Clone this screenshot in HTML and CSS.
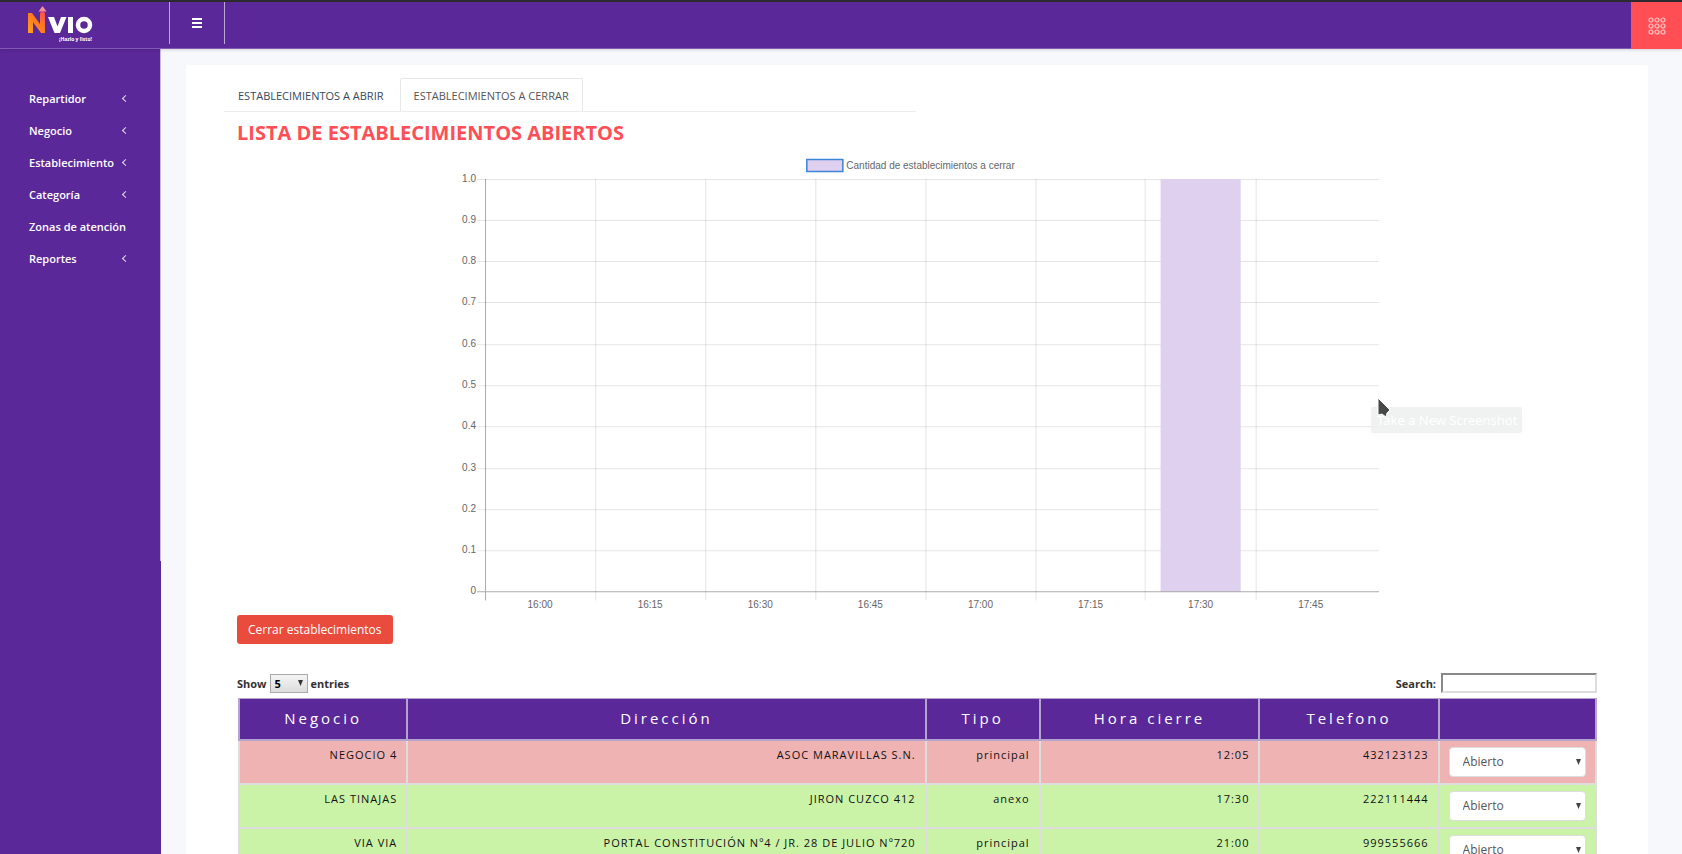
FILE: index.html
```html
<!DOCTYPE html>
<html lang="es">
<head>
<meta charset="utf-8">
<title>NVIO - Establecimientos a cerrar</title>
<link rel="stylesheet" href="styles.css">
</head>
<body>
<header class="topbar">
  <a class="brand" href="#" aria-label="NVIO">
    <svg width="68" height="38" viewBox="0 0 68 38">
      <defs><linearGradient id="flame" x1="0" y1="1" x2="1" y2="0"><stop offset="0" stop-color="#ffa31a"/><stop offset=".55" stop-color="#ff7a1f"/><stop offset="1" stop-color="#fb4f57"/></linearGradient></defs>
      <path d="M2 28V8h4l8 11V8h5v20h-4L7 17v11z" fill="url(#flame)"/>
      <path d="M16.500 1l4 5.500h-8z" fill="#f59098"/>
      <path d="M14.500 6.500h4V9h-4z" fill="#fb4f57"/>
      <path d="M22 12h6l3.500 9.500L35 12h5.500L34 28h-5.500zM42 12h5v16h-5z" fill="#fff"/>
      <circle cx="58" cy="20" r="6" fill="none" stroke="#fff" stroke-width="4.500"/>
      <text class="brand-tag" x="66" y="36" text-anchor="end">¡Hazlo y listo!</text>
    </svg>
  </a>
  <button class="menu-toggle" aria-label="Menú">
    <svg width="12" height="12" viewBox="0 0 12 12"><path d="M1 2h10M1 6h10M1 10h10" stroke="#fff" stroke-width="2"/></svg>
  </button>
  <button class="apps" aria-label="Aplicaciones">
    <svg width="18" height="18" viewBox="0 0 18 18" fill="none" stroke="#ffc4c6" stroke-width="1.200"><circle cx="3" cy="3" r="2"/><circle cx="9" cy="3" r="2"/><circle cx="15" cy="3" r="2"/><circle cx="3" cy="9" r="2"/><circle cx="9" cy="9" r="2"/><circle cx="15" cy="9" r="2"/><circle cx="3" cy="15" r="2"/><circle cx="9" cy="15" r="2"/><circle cx="15" cy="15" r="2"/></svg>
  </button>
</header>
<div class="shell">
  <aside class="sidebar">
    <nav class="nav">
      <a href="#"><span>Repartidor</span><i class="chevron"></i></a>
      <a href="#"><span>Negocio</span><i class="chevron"></i></a>
      <a href="#"><span>Establecimiento</span><i class="chevron"></i></a>
      <a href="#"><span>Categoría</span><i class="chevron"></i></a>
      <a href="#"><span>Zonas de atención</span></a>
      <a href="#"><span>Reportes</span><i class="chevron"></i></a>
    </nav>
  </aside>
  <main class="content">
    <section class="card">
      <div class="tabs">
        <button class="tab">ESTABLECIMIENTOS A ABRIR</button>
        <button class="tab active">ESTABLECIMIENTOS A CERRAR</button>
      </div>
      <div class="panel">
        <h1>LISTA DE ESTABLECIMIENTOS ABIERTOS</h1>
        <div class="chart">
          <svg viewBox="0 0 924 458" role="img" aria-label="Cantidad de establecimientos a cerrar">
            <rect x="351.500" y="2.500" width="36" height="12" fill="#dfd0f0" stroke="#3d84d6" stroke-width="1.500"/>
            <text x="391" y="12">Cantidad de establecimientos a cerrar</text>
            <path class="grid" d="M22 22.500H925M22 63.500H925M22 104.500H925M22 145.500H925M22 187.500H925M22 228.500H925M22 269.500H925M22 311.500H925M22 352.500H925M22 393.500H925"/>
            <path class="grid" d="M140.500 22V443M250.500 22V443M360.500 22V443M470.500 22V443M580.500 22V443M689.500 22V443M800.500 22V443"/>
            <rect x="705" y="22" width="80" height="412" fill="#dfd0f0"/>
            <path class="axis" d="M22 434.500H925M30.500 22V443"/>
            <g text-anchor="end">
              <text x="21" y="25">1.0</text><text x="21" y="66">0.9</text><text x="21" y="107">0.8</text><text x="21" y="148">0.7</text><text x="21" y="190">0.6</text><text x="21" y="231">0.5</text><text x="21" y="272">0.4</text><text x="21" y="314">0.3</text><text x="21" y="355">0.2</text><text x="21" y="396">0.1</text><text x="21" y="437">0</text>
            </g>
            <g text-anchor="middle">
              <text x="85" y="451">16:00</text><text x="195" y="451">16:15</text><text x="305" y="451">16:30</text><text x="415" y="451">16:45</text><text x="525" y="451">17:00</text><text x="635" y="451">17:15</text><text x="745" y="451">17:30</text><text x="855" y="451">17:45</text>
            </g>
          </svg>
        </div>
        <button class="btn-danger">Cerrar establecimientos</button>
        <div class="table-tools">
          <label>Show <select class="length"><option>5</option></select> entries</label>
          <label>Search: <input class="search" type="search"></label>
        </div>
        <table>
          <colgroup><col class="c-negocio"><col class="c-direccion"><col class="c-tipo"><col class="c-hora"><col class="c-telefono"><col class="c-estado"></colgroup>
          <thead><tr><th>Negocio</th><th>Dirección</th><th>Tipo</th><th>Hora cierre</th><th>Telefono</th><th></th></tr></thead>
          <tbody>
            <tr class="late"><td>NEGOCIO 4</td><td>ASOC MARAVILLAS S.N.</td><td>principal</td><td>12:05</td><td>432123123</td><td><select class="state" aria-label="Estado NEGOCIO 4"><option>Abierto</option></select></td></tr>
            <tr><td>LAS TINAJAS</td><td>JIRON CUZCO 412</td><td>anexo</td><td>17:30</td><td>222111444</td><td><select class="state" aria-label="Estado LAS TINAJAS"><option>Abierto</option></select></td></tr>
            <tr><td>VIA VIA</td><td>PORTAL CONSTITUCIÓN Nº4 / JR. 28 DE JULIO Nº720</td><td>principal</td><td>21:00</td><td>999555666</td><td><select class="state" aria-label="Estado VIA VIA"><option>Abierto</option></select></td></tr>
          </tbody>
        </table>
      </div>
    </section>
  </main>
</div>
<div class="hint">Take a New Screenshot</div>
<svg class="pointer" width="14" height="22" viewBox="0 0 14 22"><path d="M1 1v17l4-1 4 3 1-4 3-3z" fill="#484848" stroke="#fff"/></svg>
</body>
</html>
```
FILE: styles.css
```css
* { box-sizing: border-box; }
body {
  margin: 0;
  height: 100vh;
  overflow: hidden;
  display: flex;
  flex-direction: column;
  border-top: 2px solid #2b2a2e;
  background: #f7f8fb;
  font-family: "Open Sans", "Noto Sans", sans-serif;
  font-size: 12px;
  color: #333;
}
button, select, input { font: inherit; }
button { border: 0; padding: 0; background: none; cursor: pointer; }
a { color: inherit; text-decoration: none; }

.topbar {
  position: relative;
  z-index: 1;
  flex: none;
  display: flex;
  align-items: flex-start;
  height: 47px;
  background: #5b2899;
  border-bottom: 1px solid #8159b3;
  box-shadow: 0 1px 3px rgba(0, 0, 0, .15);
}
.brand { width: 169px; padding: 3px 0 0 26px; }
.brand svg { display: block; }
.brand-tag { font-size: 5px; font-weight: 700; fill: #fff; }
.menu-toggle {
  display: flex;
  align-items: center;
  justify-content: center;
  width: 56px;
  height: 42px;
  border: solid #bca6d8;
  border-width: 0 1px;
}
.apps {
  display: flex;
  align-items: center;
  justify-content: center;
  width: 51px;
  height: 47px;
  margin-left: auto;
  background: #ff4e54;
}

.shell { flex: 1; min-height: 0; display: flex; }
.sidebar { flex: none; width: 161px; background: #5b2899; }
.nav {
  height: 60vh;
  padding-top: 33px;
  border-right: 1px solid #c9b8df;
  color: #fff;
  font-size: 11px;
  font-weight: 600;
}
.nav a {
  display: flex;
  align-items: center;
  justify-content: space-between;
  height: 32px;
  padding: 0 32px 0 29px;
  white-space: nowrap;
}
.chevron {
  width: 5px;
  height: 5px;
  border: solid #e6dcf2;
  border-width: 0 0 1px 1px;
  transform: rotate(45deg);
}

.content { flex: 1; min-width: 0; padding: 16px 34px 0 25px; }
.card { padding: 13px 51px 40px; background: #fff; border-radius: 3px; }
.tabs {
  display: flex;
  width: 692px;
  margin-left: -13px;
  border-bottom: 1px solid #ededed;
}
.tab {
  height: 33px;
  padding: 0 13px;
  border: 1px solid transparent;
  border-bottom: 0;
  color: #34495e;
  font-size: 11px;
}
.tab.active {
  margin: 0 0 -1px 2px;
  background: #fff;
  border-color: #e8e8e8;
  border-radius: 2px 2px 0 0;
  color: #555;
}
h1 {
  margin: 7px 0 10px;
  font-size: 20px;
  line-height: 28px;
  font-weight: 700;
  color: #fe4f57;
}
.chart { width: 68%; margin: 0 auto; }
.chart svg { display: block; width: 100%; }
.chart text { font: 10px "Liberation Sans", Arial, sans-serif; fill: #666; }
.grid { stroke: #000; stroke-opacity: .1; fill: none; }
.axis { stroke: #000; stroke-opacity: .33; fill: none; }
.btn-danger {
  display: block;
  height: 29px;
  padding: 0 11px;
  border-radius: 3px;
  background: #e94c3d;
  color: #fff;
}
.table-tools {
  display: flex;
  justify-content: space-between;
  align-items: center;
  margin: 29px 0 5px;
  font-size: 11px;
  font-weight: 700;
}
.table-tools label { display: flex; align-items: center; gap: 3px; }
.length, .state { appearance: none; }
.length {
  width: 38px;
  height: 19px;
  padding: 0 4px;
  border: 1px solid #aaa;
  background: url("data:image/svg+xml,%3Csvg xmlns='http://www.w3.org/2000/svg' width='5' height='6'%3E%3Cpath d='M0 0h5L2.5 6z' fill='%23333'/%3E%3C/svg%3E") no-repeat right 4px center, linear-gradient(#f4f4f4, #ddd);
}
.search { width: 156px; height: 20px; margin-left: 2px; border: 2px inset #ddd; background: #fff; }

table { width: calc(100% - 1px); margin-left: 1px; table-layout: fixed; border-collapse: collapse; }
.c-negocio { width: 12.4%; }
.c-direccion { width: 38.2%; }
.c-tipo { width: 8.4%; }
.c-hora { width: 16.2%; }
.c-telefono { width: 13.2%; }
.c-estado { width: 11.6%; }
th, td { border: 2px solid #ddd; }
th {
  height: 41px;
  padding: 0 0 2px;
  border-color: #b5a3cf;
  border-top-width: 1px;
  background: #5b2899;
  color: #fff;
  font-size: 15px;
  font-weight: 400;
  letter-spacing: 3px;
}
td {
  padding: 6px 9px;
  background: #caf3a8;
  color: #111;
  font-size: 11px;
  line-height: 16px;
  letter-spacing: 1px;
  text-align: right;
  vertical-align: top;
}
.late td { background: #efb3b3; }
.state {
  display: block;
  width: 100%;
  height: 30px;
  padding: 0 13px;
  border: 1px solid #ddd;
  border-radius: 4px;
  background: #fff url("data:image/svg+xml,%3Csvg xmlns='http://www.w3.org/2000/svg' width='5' height='6'%3E%3Cpath d='M0 0h5L2.5 6z' fill='%23444'/%3E%3C/svg%3E") no-repeat right 4px center;
  color: #555;
  font-size: 12px;
}

.hint {
  position: absolute;
  left: 1371px;
  top: 407px;
  padding: 4px 5px 4px 6px;
  border-radius: 2px;
  background: rgba(238, 240, 239, .9);
  box-shadow: 0 4px 8px rgba(0, 0, 0, .02);
  color: #fff;
  font: 13px/18px "Noto Sans", sans-serif;
}
.pointer { position: absolute; left: 1377px; top: 397px; }
```
